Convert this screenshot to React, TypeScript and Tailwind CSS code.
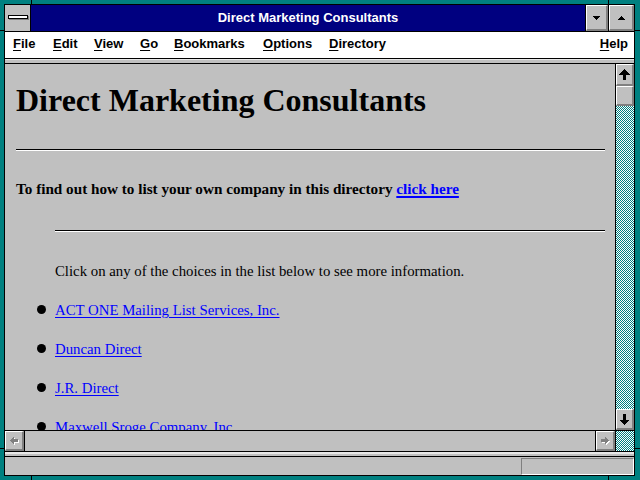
import React from "react";

type Dir = "up" | "down" | "left" | "right";

function PixelArrow({
  dir,
  head,
  stemW,
  stemL,
  color,
  shadow,
}: {
  dir: Dir;
  head: number;
  stemW: number;
  stemL: number;
  color: string;
  shadow?: string;
}) {
  const cells: [number, number][] = [];
  const W = 2 * head - 1;
  for (let r = 0; r < head; r++) {
    for (let x = head - 1 - r; x <= head - 1 + r; x++) cells.push([x, r]);
  }
  const s0 = head - 1 - Math.floor(stemW / 2);
  for (let y = head; y < head + stemL; y++) {
    for (let x = s0; x < s0 + stemW; x++) cells.push([x, y]);
  }
  const L = head + stemL;
  const tr = (c: [number, number]): [number, number] => {
    const [x, y] = c;
    if (dir === "up") return [x, y];
    if (dir === "down") return [x, L - 1 - y];
    if (dir === "left") return [y, x];
    return [L - 1 - y, x];
  };
  const horiz = dir === "left" || dir === "right";
  const w = (horiz ? L : W) + (shadow ? 1 : 0);
  const h = (horiz ? W : L) + (shadow ? 1 : 0);
  const pts = cells.map(tr);
  return (
    <svg width={w} height={h} viewBox={`0 0 ${w} ${h}`} shapeRendering="crispEdges">
      {shadow &&
        pts.map(([x, y], i) => (
          <rect key={"s" + i} x={x + 1} y={y + 1} width={1} height={1} fill={shadow} />
        ))}
      {pts.map(([x, y], i) => (
        <rect key={i} x={x} y={y} width={1} height={1} fill={color} />
      ))}
    </svg>
  );
}

function Tri({ dir }: { dir: "up" | "down" }) {
  const rows = [1, 3, 5, 7];
  const cells: [number, number][] = [];
  rows.forEach((wd, r) => {
    const start = 3 - r;
    for (let x = start; x < start + wd; x++) cells.push([x, dir === "up" ? r : 3 - r]);
  });
  return (
    <svg width={7} height={4} viewBox="0 0 7 4" shapeRendering="crispEdges">
      {cells.map(([x, y], i) => (
        <rect key={i} x={x} y={y} width={1} height={1} fill="#000" />
      ))}
    </svg>
  );
}

function Dither({ id }: { id: string }) {
  return (
    <svg width="100%" height="100%" shapeRendering="crispEdges" className="block">
      <defs>
        <pattern id={id} width="2" height="2" patternUnits="userSpaceOnUse">
          <rect x="0" y="0" width="2" height="2" fill="#ffffff" />
          <rect x="0" y="0" width="1" height="1" fill="#008080" />
          <rect x="1" y="1" width="1" height="1" fill="#008080" />
        </pattern>
      </defs>
      <rect width="100%" height="100%" fill={`url(#${id})`} />
    </svg>
  );
}

const btn3d =
  "bg-[#c0c0c0] border-t border-l border-t-white border-l-white border-b-2 border-r-2 border-b-[#808080] border-r-[#808080] flex items-center justify-center";

function MenuItem({ first, rest, w }: { first: string; rest: string; w?: string }) {
  return (
    <span className={w ? `${w} shrink-0` : "shrink-0"}>
      <span className="underline underline-offset-[2px] decoration-1">{first}</span>
      {rest}
    </span>
  );
}

export default function App() {
  const links = [
    "ACT ONE Mailing List Services, Inc.",
    "Duncan Direct",
    "J.R. Direct",
    "Maxwell Sroge Company, Inc.",
  ];
  return (
    <div className="relative w-[640px] h-[480px] bg-[#008080] pt-[4px] pl-[4px] pr-[5px] pb-[4px]">
      {/* frame ticks */}
      <div className="absolute left-[31px] top-0 w-px h-[4px] bg-black" />
      <div className="absolute left-[608px] top-0 w-px h-[4px] bg-black" />
      <div className="absolute left-[31px] bottom-0 w-px h-[4px] bg-black" />
      <div className="absolute left-[608px] bottom-0 w-px h-[4px] bg-black" />
      <div className="absolute left-0 top-[30px] w-[4px] h-px bg-black" />
      <div className="absolute left-0 top-[448px] w-[4px] h-px bg-black" />
      <div className="absolute right-0 top-[30px] w-[5px] h-px bg-black" />
      <div className="absolute right-0 top-[448px] w-[5px] h-px bg-black" />

      <div className="w-full h-full border border-black bg-[#c0c0c0] flex flex-col font-['Liberation_Sans',Arial,sans-serif]">
        {/* title bar */}
        <div className="h-[26px] flex shrink-0">
          <div className="w-[26px] bg-[#c0c0c0] border-r border-black flex items-center justify-center">
            <div className="w-[20px] h-[4px] bg-white border border-black shadow-[1px_1px_0_#808080] -mt-[2px]" />
          </div>
          <div className="flex-1 bg-[#000080] text-white font-bold text-[13px] flex items-center justify-center pb-[1px]">
            Direct Marketing Consultants
          </div>
          <div className="w-[23px] border-l border-black">
            <div className={`${btn3d} w-full h-full`}>
              <Tri dir="down" />
            </div>
          </div>
          <div className="w-[26px] border-l border-black">
            <div className={`${btn3d} w-full h-full`}>
              <Tri dir="up" />
            </div>
          </div>
        </div>
        <div className="h-px bg-black shrink-0" />
        {/* menu */}
        <div className="h-[26px] bg-white flex items-center pl-[8px] pr-[6px] text-[13px] font-bold text-black pb-[2px] shrink-0">
          <MenuItem first="F" rest="ile" w="w-[40px]" />
          <MenuItem first="E" rest="dit" w="w-[41px]" />
          <MenuItem first="V" rest="iew" w="w-[46px]" />
          <MenuItem first="G" rest="o" w="w-[34px]" />
          <MenuItem first="B" rest="ookmarks" w="w-[89px]" />
          <MenuItem first="O" rest="ptions" w="w-[66px]" />
          <MenuItem first="D" rest="irectory" />
          <span className="ml-auto">
            <MenuItem first="H" rest="elp" />
          </span>
        </div>
        <div className="h-px bg-black shrink-0" />
        <div className="h-[4px] bg-[#c0c0c0] border-t border-t-[#e8e8e8] shrink-0" />
        <div className="h-px bg-black shrink-0" />

        {/* main */}
        <div className="h-[366px] flex shrink-0">
          <div className="flex-1 overflow-hidden bg-[#c0c0c0] pl-[11px] font-['Liberation_Serif','Times_New_Roman',serif] text-black">
            <h1 className="mt-[20px] text-[32px] leading-[32px] font-bold whitespace-nowrap">
              Direct Marketing Consultants
            </h1>
            <div className="mt-[33px] mr-[10px] border-t border-t-black border-b border-b-white" />
            <p className="mt-[29px] text-[15.2px] leading-[18px] font-bold whitespace-nowrap">
              To find out how to list your own company in this directory{" "}
              <a className="text-[#0000ff] underline decoration-2 underline-offset-[2px]">click here</a>
            </p>
            <div className="mt-[32px] ml-[39px] mr-[10px] border-t border-t-black border-b border-b-white" />
            <p className="mt-[30px] ml-[39px] text-[14.8px] leading-[18px] whitespace-nowrap">
              Click on any of the choices in the list below to see more information.
            </p>
            <ul>
              {links.map((l) => (
                <li key={l} className="mt-[21px] flex items-start text-[14.8px] leading-[18px]">
                  <span className="ml-[21px] mt-[4px] w-[9px] h-[9px] rounded-full bg-black shrink-0" />
                  <a className="ml-[9px] text-[#0000ff] underline underline-offset-[2px] whitespace-nowrap">{l}</a>
                </li>
              ))}
            </ul>
          </div>
          <div className="w-[19px] border-l border-black flex flex-col">
            <div className={`${btn3d} h-[22px] shrink-0`}>
              <PixelArrow dir="up" head={6} stemW={3} stemL={5} color="#000" />
            </div>
            <div className={`${btn3d} h-[20px] shrink-0`} />
            <div className="flex-1 overflow-hidden">
              <Dither id="d1" />
            </div>
            <div className={`${btn3d} h-[21px] shrink-0`}>
              <PixelArrow dir="down" head={5} stemW={3} stemL={6} color="#000" />
            </div>
          </div>
        </div>
        <div className="h-px bg-black shrink-0" />
        {/* horizontal scrollbar */}
        <div className="h-[20px] flex shrink-0">
          <div className="flex-1 flex">
            <div className={`${btn3d} w-[19px] shrink-0`}>
              <PixelArrow dir="left" head={4} stemW={3} stemL={4} color="#808080" shadow="#ffffff" />
            </div>
            <div className="flex-1 border-l border-r border-black bg-[#c0c0c0]" />
            <div className={`${btn3d} w-[19px] shrink-0`}>
              <PixelArrow dir="right" head={4} stemW={3} stemL={4} color="#808080" shadow="#ffffff" />
            </div>
          </div>
          <div className="w-[19px] border-l border-black overflow-hidden">
            <Dither id="d2" />
          </div>
        </div>
        <div className="h-px bg-black shrink-0" />
        <div className="h-[4px] bg-[#c0c0c0] border-t-2 border-t-[#e8e8e8] shrink-0" />
        <div className="h-px bg-black shrink-0" />
        {/* status bar */}
        <div className="flex-1 flex bg-[#c0c0c0]">
          <div className="ml-auto mt-[1px] h-[17px] w-[113px] border-t border-l border-t-[#808080] border-l-[#808080] border-b border-r border-b-white border-r-white" />
        </div>
      </div>
    </div>
  );
}
